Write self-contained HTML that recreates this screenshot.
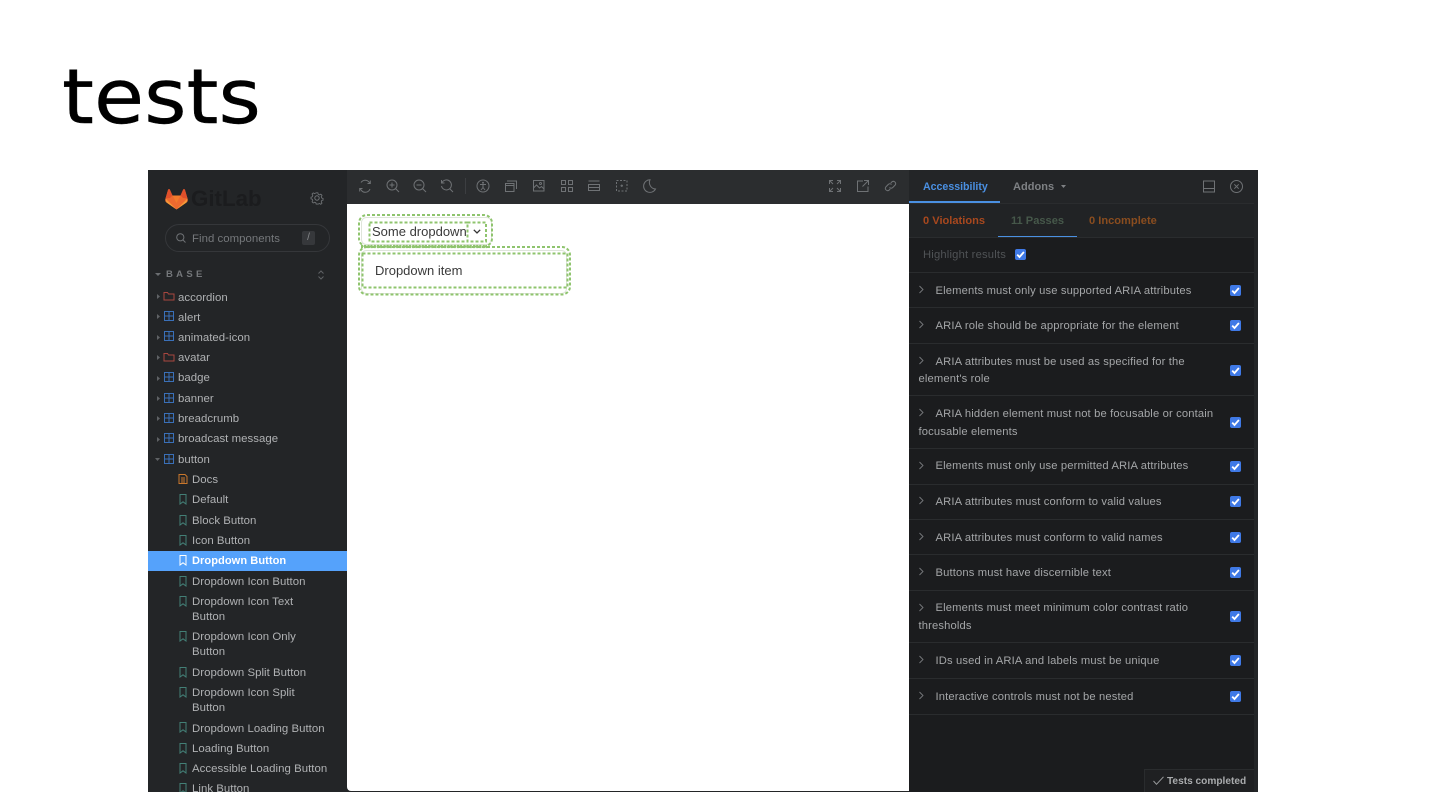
<!DOCTYPE html>
<html><head><meta charset="utf-8">
<style>
html,body{margin:0;padding:0;background:#fff;width:1440px;height:810px;overflow:hidden}
body{position:relative;font-family:"Liberation Sans",sans-serif}
.h{position:absolute;left:62px;top:53px;font:76px/88px "DejaVu Sans",sans-serif;color:#000;white-space:nowrap;transform:scaleX(1.072);transform-origin:0 0;-webkit-text-stroke:.4px #000}
#s{position:absolute;left:148px;top:170px;width:1110px;height:622px;overflow:hidden;background:#232527;filter:blur(.35px)}
#s div{position:absolute;white-space:nowrap}
#s svg{position:absolute;overflow:visible}
#s svg:has(use[href="#m"]),#s svg:has(use[href="#w"]),#s svg:has(use[href="#g"]),#s svg:has(use[href="#f"]),#s svg:has(use[href="#d"]){margin-top:-1px}
.t{font-size:11.4px;line-height:15px;color:#b0b2b4;letter-spacing:.04px;margin-top:1px}
.p{font-size:11.2px;line-height:17px;color:#a4a6a8;letter-spacing:.15px;margin-top:1px}
.b{height:1px;left:761px;width:345px;background:#2a2c2e}
.i{fill:none;stroke:#6f7275;stroke-width:1}
.ch{left:1082px;width:11px;height:11px;background:#3f79e6;border-radius:2px}
.tb{font-size:11.1px;line-height:15px;font-weight:700}
</style></head><body>
<svg width="0" height="0" style="position:absolute"><defs>
<symbol id="f" viewBox="0 0 12 12"><path d="M1 2.500h3.500l1 1.500H11v6H1z" fill="none" stroke="#a8463f"/></symbol>
<symbol id="g" viewBox="0 0 12 12"><path d="M1.500 1.500h9v9h-9zM6 1.500v9M1.500 6h9" fill="none" stroke="#3a70b8"/></symbol>
<symbol id="m" viewBox="0 0 12 12"><path d="M3 1.500h6v9.500L6 8.800 3 11z" fill="none" stroke="#437f76"/></symbol>
<symbol id="w" viewBox="0 0 12 12"><path d="M3 1.500h6v9.500L6 8.800 3 11z" fill="none" stroke="#fff"/></symbol>
<symbol id="d" viewBox="0 0 12 12"><path d="M2 1.500h6l2 2v7H2zM4 5h4M4 7h4M4 9h4" fill="none" stroke="#c9772c"/></symbol>
<symbol id="c" viewBox="0 0 11 11"><path d="M2.200 5.600l2.300 2.400 4.400-5" fill="none" stroke="#fff" stroke-width="1.800"/></symbol>
<symbol id="a" viewBox="0 0 5 9"><path d="M.5 1l3.500 3.500L.5 8" fill="none" stroke="#77797c" stroke-width=".9"/></symbol>
</defs></svg>

<div class="h">tests</div>

<div id="s">
<!-- sidebar -->
<svg style="left:17px;top:17px" width="23" height="23" viewBox="0 0 23 23"><path d="M11.500 22.500L1.500 15.500Q-.5 14 .5 11.500L3 3Q4 1 5 3L7.500 8.500h8L18 3Q19 1 20 3L22.500 11.500Q23.500 14 21.500 15.500z" fill="#ee6a2f"/><path d="M.5 11.500L3 3Q4 1 5 3L7.500 8.500 5 11z" fill="#e0502b"/><path d="M22.500 11.500L20 3Q19 1 18 3L15.500 8.500 18 11z" fill="#e0502b"/><path d="M7.500 8.500h8L11.500 16z" fill="#f47b2c"/><path d="M1.500 15.500L.5 11.500 11.500 22.500zM21.500 15.500L22.500 11.500 11.500 22.500z" fill="#f59a38"/></svg>
<div style="left:43px;top:14px;font-size:22.300px;line-height:30px;font-weight:700;color:#1b1c1e">GitLab</div>
<svg style="left:162px;top:21px" width="14" height="14" viewBox="0 0 14 14"><circle cx="7" cy="7" r="2.200" class="i"/><path class="i" d="M6 1h2l.4 1.700 1.500.7 1.500-.9 1.400 1.400-.9 1.500.6 1.600 1.500.5v2l-1.500.4-.6 1.500.9 1.500-1.400 1.400-1.500-.9-1.500.6L8 14H6l-.4-1.500-1.500-.6-1.500.9-1.400-1.400.9-1.500-.6-1.500L0 8V6l1.500-.5.600-1.600-.9-1.500 1.400-1.400 1.500.9 1.500-.7z" transform="translate(1 1) scale(.86)"/></svg>
<div style="left:17px;top:54px;width:163px;height:26px;border:1px solid #35373a;border-radius:14px"></div>
<svg style="left:28px;top:63px" width="10" height="10" viewBox="0 0 10 10"><circle cx="4.300" cy="4.300" r="3.600" class="i"/><path d="M7 7l2.500 2.500" class="i"/></svg>
<div class="t" style="left:44px;top:61px;color:#75787b">Find components</div>
<div style="left:154px;top:61px;width:13px;height:14px;background:#36383b;border-radius:2px;color:#8b8d8f;font-size:10px;line-height:14px;text-align:center">/</div>
<svg style="left:7px;top:103px" width="6" height="3" viewBox="0 0 6 3"><path d="M0 0h6L3 3z" fill="#6b6e71"/></svg>
<div style="left:18px;top:98px;font-size:9.500px;line-height:14px;font-weight:700;letter-spacing:3.300px;color:#74777a">BASE</div>
<svg style="left:170px;top:100px" width="6" height="10" viewBox="0 0 6 10"><path d="M.5 3.500L3 1l2.500 2.500M.5 6.500L3 9l2.500-2.500" fill="none" stroke="#5f6265"/></svg>

<svg style="left:9px;top:124px" width="3" height="5" viewBox="0 0 3 5"><path d="M0 0l3 2.500L0 5z" fill="#5f6265"/></svg>
<svg style="left:15px;top:121px" width="12" height="12"><use href="#f"/></svg><div class="t" style="left:30px;top:120px">accordion</div>
<svg style="left:9px;top:144px" width="3" height="5" viewBox="0 0 3 5"><path d="M0 0l3 2.500L0 5z" fill="#5f6265"/></svg>
<svg style="left:15px;top:141px" width="12" height="12"><use href="#g"/></svg><div class="t" style="left:30px;top:140px">alert</div>
<svg style="left:9px;top:165px" width="3" height="5" viewBox="0 0 3 5"><path d="M0 0l3 2.500L0 5z" fill="#5f6265"/></svg>
<svg style="left:15px;top:161px" width="12" height="12"><use href="#g"/></svg><div class="t" style="left:30px;top:160px">animated-icon</div>
<svg style="left:9px;top:185px" width="3" height="5" viewBox="0 0 3 5"><path d="M0 0l3 2.500L0 5z" fill="#5f6265"/></svg>
<svg style="left:15px;top:182px" width="12" height="12"><use href="#f"/></svg><div class="t" style="left:30px;top:180px">avatar</div>
<svg style="left:9px;top:206px" width="3" height="5" viewBox="0 0 3 5"><path d="M0 0l3 2.500L0 5z" fill="#5f6265"/></svg>
<svg style="left:15px;top:202px" width="12" height="12"><use href="#g"/></svg><div class="t" style="left:30px;top:200px">badge</div>
<svg style="left:9px;top:226px" width="3" height="5" viewBox="0 0 3 5"><path d="M0 0l3 2.500L0 5z" fill="#5f6265"/></svg>
<svg style="left:15px;top:223px" width="12" height="12"><use href="#g"/></svg><div class="t" style="left:30px;top:221px">banner</div>
<svg style="left:9px;top:246px" width="3" height="5" viewBox="0 0 3 5"><path d="M0 0l3 2.500L0 5z" fill="#5f6265"/></svg>
<svg style="left:15px;top:243px" width="12" height="12"><use href="#g"/></svg><div class="t" style="left:30px;top:241px">breadcrumb</div>
<svg style="left:9px;top:267px" width="3" height="5" viewBox="0 0 3 5"><path d="M0 0l3 2.500L0 5z" fill="#5f6265"/></svg>
<svg style="left:15px;top:263px" width="12" height="12"><use href="#g"/></svg><div class="t" style="left:30px;top:261px">broadcast message</div>
<svg style="left:7px;top:288px" width="5" height="3" viewBox="0 0 5 3"><path d="M0 0h5L2.500 3z" fill="#5f6265"/></svg>
<svg style="left:15px;top:284px" width="12" height="12"><use href="#g"/></svg><div class="t" style="left:30px;top:282px">button</div>

<svg style="left:29px;top:304px" width="12" height="12"><use href="#d"/></svg><div class="t" style="left:44px;top:302px">Docs</div>
<svg style="left:29px;top:324px" width="12" height="12"><use href="#m"/></svg><div class="t" style="left:44px;top:322px">Default</div>
<svg style="left:29px;top:345px" width="12" height="12"><use href="#m"/></svg><div class="t" style="left:44px;top:343px">Block Button</div>
<svg style="left:29px;top:365px" width="12" height="12"><use href="#m"/></svg><div class="t" style="left:44px;top:363px">Icon Button</div>
<div style="left:0;top:381px;width:199px;height:20px;background:#55a2fb"></div>
<svg style="left:29px;top:385px" width="12" height="12"><use href="#w"/></svg><div class="t" style="left:44px;top:383px;color:#fff;font-weight:700;font-size:11.100px">Dropdown Button</div>
<svg style="left:29px;top:406px" width="12" height="12"><use href="#m"/></svg><div class="t" style="left:44px;top:404px">Dropdown Icon Button</div>
<svg style="left:29px;top:426px" width="12" height="12"><use href="#m"/></svg><div class="t" style="left:44px;top:424px">Dropdown Icon Text</div><div class="t" style="left:44px;top:439px">Button</div>
<svg style="left:29px;top:461px" width="12" height="12"><use href="#m"/></svg><div class="t" style="left:44px;top:459px">Dropdown Icon Only</div><div class="t" style="left:44px;top:474px">Button</div>
<svg style="left:29px;top:497px" width="12" height="12"><use href="#m"/></svg><div class="t" style="left:44px;top:495px">Dropdown Split Button</div>
<svg style="left:29px;top:517px" width="12" height="12"><use href="#m"/></svg><div class="t" style="left:44px;top:515px">Dropdown Icon Split</div><div class="t" style="left:44px;top:530px">Button</div>
<svg style="left:29px;top:552px" width="12" height="12"><use href="#m"/></svg><div class="t" style="left:44px;top:551px">Dropdown Loading Button</div>
<svg style="left:29px;top:573px" width="12" height="12"><use href="#m"/></svg><div class="t" style="left:44px;top:571px">Loading Button</div>
<svg style="left:29px;top:593px" width="12" height="12"><use href="#m"/></svg><div class="t" style="left:44px;top:591px">Accessible Loading Button</div>
<svg style="left:29px;top:613px" width="12" height="12"><use href="#m"/></svg><div class="t" style="left:44px;top:611px">Link Button</div>

<!-- toolbar -->
<div style="left:199px;top:0;width:562px;height:34px;background:#2b2d2f"></div>
<svg style="left:210px;top:9px" width="14" height="14" viewBox="0 0 14 14"><path class="i" d="M3 3.500A5 5 0 0 1 11 3l1 1.500M12 10a5 5 0 0 1-8.500 1.500L2 9.500M12.300 1.500v3H9.500M1.700 12.500v-3h2.800"/></svg>
<svg style="left:238px;top:9px" width="14" height="14" viewBox="0 0 14 14"><circle class="i" cx="6" cy="6" r="5"/><path class="i" d="M9.600 9.600L13 13M3.500 6h5M6 3.500v5"/></svg>
<svg style="left:265px;top:9px" width="14" height="14" viewBox="0 0 14 14"><circle class="i" cx="6" cy="6" r="5"/><path class="i" d="M9.600 9.600L13 13M3.500 6h5"/></svg>
<svg style="left:292px;top:9px" width="14" height="14" viewBox="0 0 14 14"><path class="i" d="M2 3.500A5 5 0 1 1 1.500 7M9.600 9.600L13 13M1.500 1v3h3"/></svg>
<div style="left:317px;top:8px;width:1px;height:16px;background:#3c3e41"></div>
<svg style="left:328px;top:9px" width="14" height="14" viewBox="0 0 14 14"><circle class="i" cx="7" cy="7" r="6"/><path class="i" d="M4 5.500h6M7 5.500v3M7 8.500l-2 2.500M7 8.500l2 2.500"/><circle cx="7" cy="3.700" r="1" fill="#6f7275"/></svg>
<svg style="left:357px;top:10px" width="12" height="12" viewBox="0 0 12 12"><path class="i" d="M.5 3.500h8.500v8H.5zM2 1h9.500v8M.5 5.500h8.500"/></svg>
<svg style="left:385px;top:10px" width="12" height="12" viewBox="0 0 12 12"><path class="i" d="M.5.500h10.500v10.500H.5zM.5 8l3-3 3 3 2-1.500 2.500 2.500"/><circle class="i" cx="7.500" cy="3.500" r="1"/></svg>
<svg style="left:413px;top:10px" width="12" height="12" viewBox="0 0 12 12"><path class="i" d="M.5.500h4v4h-4zM7.500.500h4v4h-4zM.5 7.500h4v4h-4zM7.500 7.500h4v4h-4z"/></svg>
<svg style="left:440px;top:10px" width="12" height="12" viewBox="0 0 12 12"><path class="i" d="M.5 1h11M.5 4.500h11v6H.5zM.5 7.500h11"/></svg>
<svg style="left:468px;top:10px" width="12" height="12" viewBox="0 0 12 12"><path class="i" stroke-dasharray="2 1.500" d="M.5.500h10.500v10.500H.5z"/><path class="i" d="M4.500 5.800h2.500M5.800 4.500V7"/></svg>
<svg style="left:495px;top:9px" width="13" height="14" viewBox="0 0 13 14"><path class="i" d="M7 .8A6.300 6.300 0 1 0 12.500 10 6.500 6.500 0 0 1 7 .8z"/></svg>
<svg style="left:681px;top:10px" width="12" height="12" viewBox="0 0 12 12"><path class="i" d="M.5 4V.5H4M8 .5h3.500V4M11.500 8v3.500H8M4 11.500H.5V8M1 1l3 3M11 1L8 4M11 11L8 8M1 11l3-3"/></svg>
<svg style="left:709px;top:10px" width="12" height="12" viewBox="0 0 12 12"><path class="i" d="M6 1H.5v10.500H11V6.500M7 .5h4.500V5M11 1L5.500 6.500"/></svg>
<svg style="left:736px;top:10px" width="13" height="12" viewBox="0 0 13 12"><path class="i" d="M5.500 7.500a2.300 2.300 0 0 0 3.300 0l2.400-2.500A2.300 2.300 0 0 0 8 1.800L6.800 3M7.500 4.500a2.300 2.300 0 0 0-3.300 0L1.800 7A2.300 2.300 0 0 0 5 10.200L6.200 9"/></svg>

<!-- preview -->
<div style="left:199px;top:34px;width:562px;height:587px;background:#fff;border-radius:0 0 0 4px"></div>
<svg style="left:199px;top:34px" width="562" height="100" viewBox="0 0 562 100" fill="none">
<g stroke="#dfe5db" stroke-width="1"><rect x="14.500" y="13.500" width="130" height="27" rx="5"/><rect x="14.500" y="46.500" width="205" height="43" rx="5"/></g>
<g stroke="#8fc46e" stroke-width="2" stroke-dasharray="3 2">
<rect x="12" y="11" width="133" height="31.500" rx="8"/>
<rect x="22.500" y="18.500" width="98" height="19"/>
<rect x="120.500" y="18.500" width="18.500" height="19"/>
<rect x="12" y="43" width="211" height="47.500" rx="8"/>
<rect x="15.500" y="49.500" width="205" height="34"/>
</g>
<path d="M14 42.500H140" stroke="#8fc46e" stroke-width="3.200" stroke-dasharray="2 1.200"/>
</svg>
<div style="left:224px;top:54px;font-size:13px;line-height:15px;color:#3a3a3a">Some dropdown</div>
<svg style="left:325px;top:59px" width="8" height="5" viewBox="0 0 8 5"><path d="M.8.800L4 4l3.200-3.200" fill="none" stroke="#333" stroke-width="1.300"/></svg>
<div style="left:227px;top:93px;font-size:13px;line-height:16px;color:#3a3a3a">Dropdown item</div>

<!-- panel -->
<div style="left:761px;top:0;width:349px;height:622px;background:#1b1c1e"></div>
<div style="left:761px;top:0;width:345px;height:34px;background:#232527"></div>
<div style="left:761px;top:31px;width:91px;height:2px;background:#4a90e2"></div>
<div style="left:775px;top:9px;font-size:10.600px;line-height:15px;font-weight:700;color:#4a90e2;margin-top:1px">Accessibility</div>
<div class="t" style="left:865px;top:9px;font-weight:700;font-size:11px;color:#7e8184">Addons</div>
<svg style="left:913px;top:15px" width="5" height="3" viewBox="0 0 5 3"><path d="M0 0h5L2.500 3z" fill="#7e8184"/></svg>
<svg style="left:1055px;top:10px" width="12" height="13" viewBox="0 0 12 13"><path class="i" d="M.5 1h11v11H.5zM.5 8.500h11"/></svg>
<svg style="left:1082px;top:10px" width="13" height="13" viewBox="0 0 13 13"><circle class="i" cx="6.500" cy="6.500" r="6"/><path class="i" d="M4.300 4.300l4.400 4.400M8.700 4.300l-4.400 4.400"/></svg>
<div class="b" style="top:33px"></div>
<div style="left:761px;top:34px;width:345px;height:34px;background:#212325"></div>
<div style="left:850px;top:66px;width:79px;height:2px;background:#4a90e2"></div>
<div class="tb" style="left:775px;top:44px;color:#a8481e">0 Violations</div>
<div class="tb" style="left:863px;top:44px;color:#46584a">11 Passes</div>
<div class="tb" style="left:941px;top:44px;color:#8a4d1f">0 Incomplete</div>
<div class="b" style="top:67px"></div>
<div class="p" style="left:775px;top:76px;color:#505356;letter-spacing:.2px">Highlight results</div>
<div class="ch" style="left:867px;top:79px"><svg width="11" height="11"><use href="#c"/></svg></div>
<div class="b" style="top:102px"></div>

<svg style="left:771px;top:115px" width="5" height="9"><use href="#a"/></svg>
<div class="p" style="left:787.500px;top:112px">Elements must only use supported ARIA attributes</div>
<div class="ch" style="top:115px"><svg width="11" height="11"><use href="#c"/></svg></div>
<div class="b" style="top:137px"></div>

<svg style="left:771px;top:150px" width="5" height="9"><use href="#a"/></svg>
<div class="p" style="left:787.500px;top:147px">ARIA role should be appropriate for the element</div>
<div class="ch" style="top:150px"><svg width="11" height="11"><use href="#c"/></svg></div>
<div class="b" style="top:173px"></div>

<svg style="left:771px;top:186px" width="5" height="9"><use href="#a"/></svg>
<div class="p" style="left:787.500px;top:183px">ARIA attributes must be used as specified for the</div>
<div class="p" style="left:770.500px;top:200px">element's role</div>
<div class="ch" style="top:195px"><svg width="11" height="11"><use href="#c"/></svg></div>
<div class="b" style="top:225px"></div>

<svg style="left:771px;top:238px" width="5" height="9"><use href="#a"/></svg>
<div class="p" style="left:787.500px;top:235px">ARIA hidden element must not be focusable or contain</div>
<div class="p" style="left:770.500px;top:253px">focusable elements</div>
<div class="ch" style="top:247px"><svg width="11" height="11"><use href="#c"/></svg></div>
<div class="b" style="top:278px"></div>

<svg style="left:771px;top:291px" width="5" height="9"><use href="#a"/></svg>
<div class="p" style="left:787.500px;top:287px">Elements must only use permitted ARIA attributes</div>
<div class="ch" style="top:291px"><svg width="11" height="11"><use href="#c"/></svg></div>
<div class="b" style="top:314px"></div>

<svg style="left:771px;top:326px" width="5" height="9"><use href="#a"/></svg>
<div class="p" style="left:787.500px;top:323px">ARIA attributes must conform to valid values</div>
<div class="ch" style="top:326px"><svg width="11" height="11"><use href="#c"/></svg></div>
<div class="b" style="top:349px"></div>

<svg style="left:771px;top:362px" width="5" height="9"><use href="#a"/></svg>
<div class="p" style="left:787.500px;top:359px">ARIA attributes must conform to valid names</div>
<div class="ch" style="top:362px"><svg width="11" height="11"><use href="#c"/></svg></div>
<div class="b" style="top:384px"></div>

<svg style="left:771px;top:397px" width="5" height="9"><use href="#a"/></svg>
<div class="p" style="left:787.500px;top:394px">Buttons must have discernible text</div>
<div class="ch" style="top:397px"><svg width="11" height="11"><use href="#c"/></svg></div>
<div class="b" style="top:420px"></div>

<svg style="left:771px;top:433px" width="5" height="9"><use href="#a"/></svg>
<div class="p" style="left:787.500px;top:429px">Elements must meet minimum color contrast ratio</div>
<div class="p" style="left:770.500px;top:447px">thresholds</div>
<div class="ch" style="top:441px"><svg width="11" height="11"><use href="#c"/></svg></div>
<div class="b" style="top:472px"></div>

<svg style="left:771px;top:485px" width="5" height="9"><use href="#a"/></svg>
<div class="p" style="left:787.500px;top:482px">IDs used in ARIA and labels must be unique</div>
<div class="ch" style="top:485px"><svg width="11" height="11"><use href="#c"/></svg></div>
<div class="b" style="top:508px"></div>

<svg style="left:771px;top:521px" width="5" height="9"><use href="#a"/></svg>
<div class="p" style="left:787.500px;top:518px">Interactive controls must not be nested</div>
<div class="ch" style="top:521px"><svg width="11" height="11"><use href="#c"/></svg></div>
<div class="b" style="top:544px"></div>

<div style="left:996px;top:599px;width:110px;height:23px;background:#1f2022;border-top:1px solid #2a2c2e;border-left:1px solid #2a2c2e;box-sizing:border-box"></div>
<svg style="left:1005px;top:606px" width="11" height="9" viewBox="0 0 11 9"><path d="M.5 5l3 3.300L10.500.8" fill="none" stroke="#9a9c9e"/></svg>
<div style="left:1019px;top:605px;font-size:10.150px;line-height:14px;font-weight:700;color:#a9abad">Tests completed</div>
<div style="left:1106px;top:0;width:4px;height:622px;background:#232527"></div>
</div>
</body></html>
